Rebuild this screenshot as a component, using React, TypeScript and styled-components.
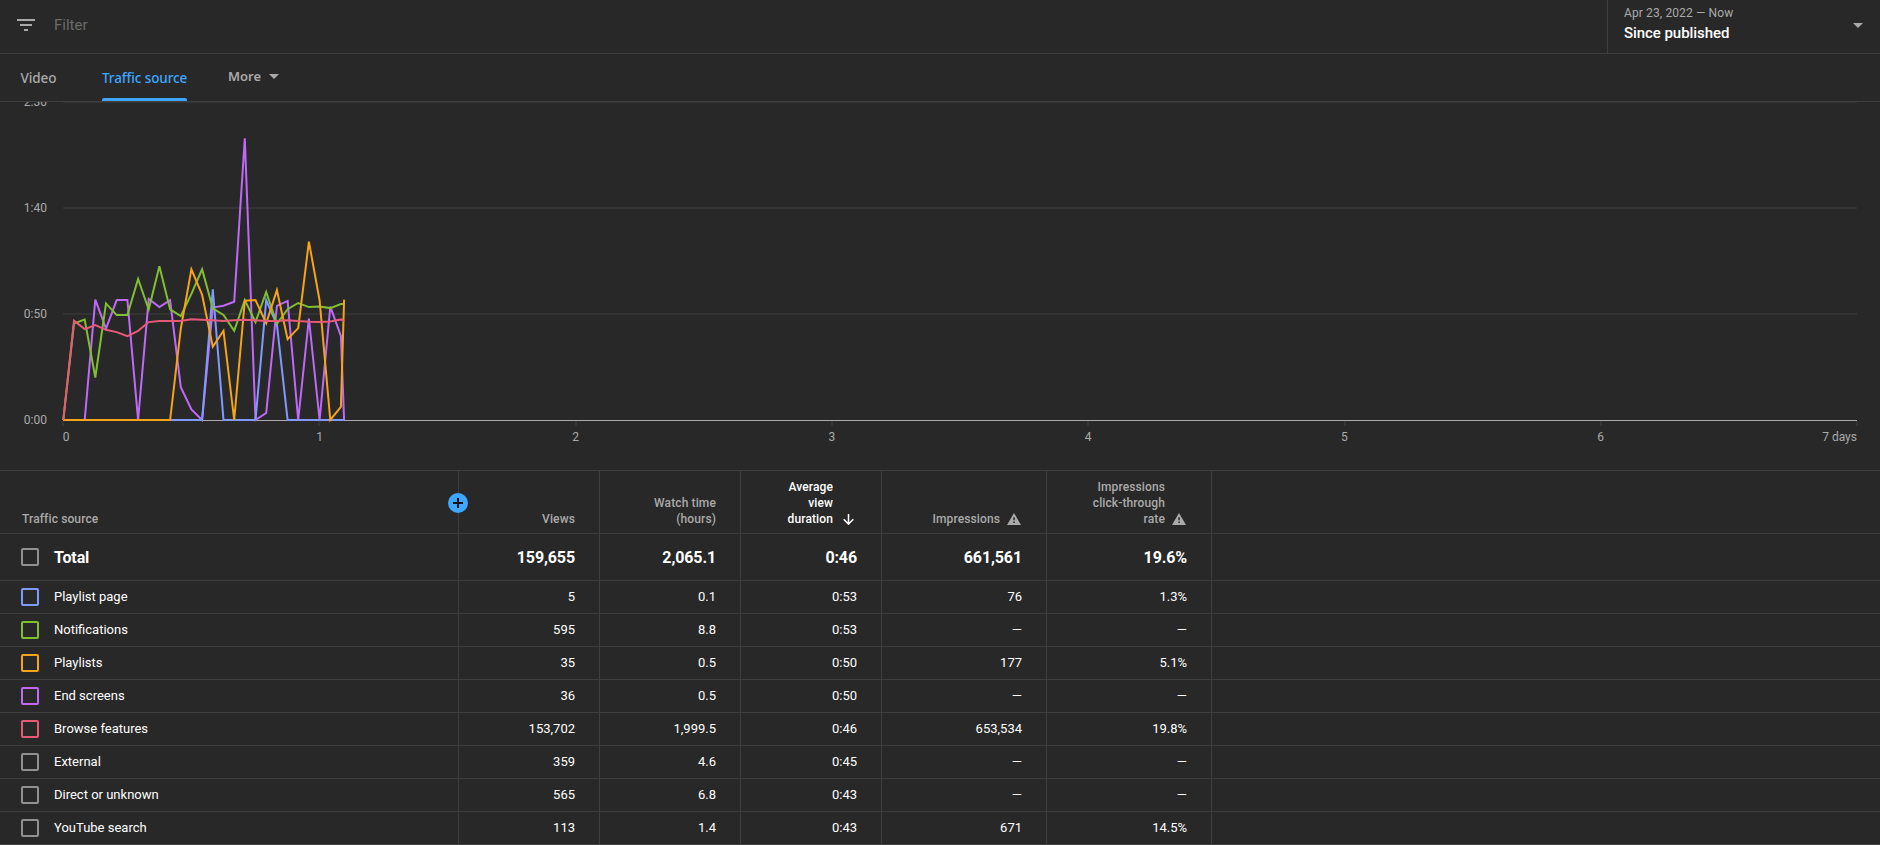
import React from "react";
import styled, { createGlobalStyle } from "styled-components";

type Punto = [number, number];

interface Serie {
    color: string;
    puntos: Punto[];
}

interface Fila {
    nombre: string;
    color: string;
    valores: string[];
}

const GRIS = "#909090";

const filas: Fila[] = [
    { nombre: "Playlist page", color: "#8099ff", valores: ["5", "0.1", "0:53", "76", "1.3%"] },
    { nombre: "Notifications", color: "#80c030", valores: ["595", "8.8", "0:53", "—", "—"] },
    { nombre: "Playlists", color: "#f5a318", valores: ["35", "0.5", "0:50", "177", "5.1%"] },
    { nombre: "End screens", color: "#bf69f9", valores: ["36", "0.5", "0:50", "—", "—"] },
    { nombre: "Browse features", color: "#e65a78", valores: ["153,702", "1,999.5", "0:46", "653,534", "19.8%"] },
    { nombre: "External", color: GRIS, valores: ["359", "4.6", "0:45", "—", "—"] },
    { nombre: "Direct or unknown", color: GRIS, valores: ["565", "6.8", "0:43", "—", "—"] },
    { nombre: "YouTube search", color: GRIS, valores: ["113", "1.4", "0:43", "671", "14.5%"] },
];

// [hour, seconds]
const series: Serie[] = [
    {
        color: "#bf69f9",
        puntos: [[0, 0], [2, 0], [3, 56.7], [4, 43], [5, 56.5], [6, 56.5], [7, 0], [8, 57], [9, 53.2], [10, 56.5], [11, 15.5], [12, 5], [13, 0],
            [14, 53], [15, 53.8], [16, 55.7], [17, 132.7], [18, 0], [19, 3.3], [20, 53.8], [21, 56.1], [22, 0], [23, 47.8], [24, 0], [25, 53.4], [26, 39.6], [26.3, 0]],
    },
    {
        color: "#8099ff",
        puntos: [[0, 0], [13, 0], [14, 61.5], [15, 0], [18, 0], [19, 56.4], [20, 45], [21, 0], [26.3, 0]],
    },
    {
        color: "#80c030",
        puntos: [[0, 0], [1, 45.5], [2, 47.3], [3, 20], [4, 54.9], [5, 49.4], [6, 49.4], [7, 66.4], [8, 52], [9, 72.4], [10, 52.1], [11, 49], [12, 59.4],
            [13, 71], [14, 52.6], [15, 49.5], [16, 42], [17, 56.5], [18, 46.1], [19, 60.3], [20, 45.3], [21, 52.2], [22, 55.1], [23, 53.2], [24, 53.5], [25, 52.7], [26, 54.6], [26.3, 54.7]],
    },
    {
        color: "#f5a318",
        puntos: [[0, 0], [10, 0], [11, 43], [12, 71], [13, 59], [14, 34.5], [15, 42], [16, 0], [17, 56.2], [18, 56.5], [19, 45.6], [20, 61.2], [21, 38.1],
            [22, 43.3], [23, 84], [24, 56.3], [25, 0], [26, 6.1], [26.3, 56.7]],
    },
    {
        color: "#e65a78",
        puntos: [[0, 0], [1, 46.8], [2, 42.8], [3, 44.7], [4, 42.5], [5, 41.4], [6, 39.5], [7, 42], [8, 46.1], [9, 46.6], [10, 46.6], [11, 46.7], [12, 47.5],
            [13, 47.2], [14, 47], [15, 46.7], [16, 47], [17, 47.2], [18, 47], [19, 46.7], [20, 46.6], [21, 47], [22, 46.7], [23, 46.3], [24, 46.1], [25, 46.4], [26, 47.4], [26.3, 46.6]],
    },
];

const X0 = 63.3;
const ANCHO_HORA = 1794 / 7 / 24;
const Y0 = 318;

const aPuntos = (puntos: Punto[]) =>
    puntos.map(([h, s]) => `${(X0 + h * ANCHO_HORA).toFixed(1)},${(Y0 - s * 2.123).toFixed(1)}`).join(" ");

const Grafico = () => (
    <Svg width="1880" height="368" viewBox="0 0 1880 368">
        <rect x="63" y="0" width="1794" height="1" fill="#333" />
        <rect x="63" y="105" width="1794" height="2" fill="#333" />
        <rect x="63" y="211" width="1794" height="2" fill="#333" />
        <rect x="63" y="318" width="1794" height="1" fill="#aaa" />
        {[0, 1, 2, 3, 4, 5, 6, 7].map((d) => (
            <rect key={d} x={Math.min(1856, 62 + Math.round(d * 256.3))} y="319" width="2" height="5" fill="#333" />
        ))}
        {["2:30", "1:40", "0:50", "0:00"].map((t, i) => (
            <TextoEje key={t} x="47" y={3.7 + i * 106.1} textAnchor="end">{t}</TextoEje>
        ))}
        {[0, 1, 2, 3, 4, 5, 6].map((d) => (
            <TextoEje key={d} x={d === 0 ? 66 : 63.3 + d * 256.2} y="339" textAnchor="middle">{d}</TextoEje>
        ))}
        <TextoEje x="1857" y="339" textAnchor="end">7 days</TextoEje>
        {series.map((s) => (
            <polyline key={s.color} points={aPuntos(s.puntos)} fill="none" stroke={s.color} strokeWidth="2" />
        ))}
    </Svg>
);

const IconoFiltro = () => (
    <svg width="18" height="12" viewBox="0 0 18 12" fill="#aaa">
        <path d="M0 0h18v2H0zM3 5h12v2H3zM7 10h4v2H7z" />
    </svg>
);

const Flecha = () => (
    <svg width="10" height="5" viewBox="0 0 10 5" fill="#aaa">
        <path d="M0 0h10L5 5z" />
    </svg>
);

const IconoAviso = () => (
    <svg width="14" height="12" viewBox="0 0 14 12">
        <path d="M7 0l7 12H0z" fill="#aaa" />
        <path d="M6.3 4.2h1.5v3H6.3zM6.3 8.5h1.5V10H6.3z" fill="#282828" />
    </svg>
);

const IconoOrden = () => (
    <svg width="11" height="11" viewBox="0 0 11 11" fill="none" stroke="#fff" strokeWidth="1.5">
        <path d="M5.5 0v10M0.7 5.3l4.8 4.8 4.8-4.8" />
    </svg>
);

const App = () => {
    return (
        <>
            <EstiloGlobal />
            <Pagina>
                <BarraFiltro>
                    <ZonaFiltro>
                        <IconoFiltro />
                        <TextoFiltro>Filter</TextoFiltro>
                    </ZonaFiltro>
                    <Periodo>
                        <TextosPeriodo>
                            <Fechas>Apr 23, 2022 — Now</Fechas>
                            <TituloPeriodo>Since published</TituloPeriodo>
                        </TextosPeriodo>
                        <Flecha />
                    </Periodo>
                </BarraFiltro>

                <BarraPestanas>
                    <Pestana>Video</Pestana>
                    <Pestana $activa>Traffic source</Pestana>
                    <BotonMas><TextoMas>More</TextoMas> <Flecha /></BotonMas>
                </BarraPestanas>

                <Grafico />

                <Tabla>
                    <FilaTabla $alto={63}>
                        <CeldaNombre $cabecera>
                            Traffic source
                            <BotonAgregar>
                                <svg width="10" height="10" viewBox="0 0 10 10" fill="#111">
                                    <path d="M4 0h2v4h4v2H6v4H4V6H0V4h4z" />
                                </svg>
                            </BotonAgregar>
                        </CeldaNombre>
                        <CeldaCabecera>Views</CeldaCabecera>
                        <CeldaCabecera>Watch time<br />(hours)</CeldaCabecera>
                        <CeldaCabecera $activa>
                            Average<br />view<br />duration
                            <HuecoOrden><IconoOrden /></HuecoOrden>
                        </CeldaCabecera>
                        <CeldaCabecera $icono>
                            Impressions
                            <HuecoAviso><IconoAviso /></HuecoAviso>
                        </CeldaCabecera>
                        <CeldaCabecera $icono>
                            Impressions<br />click-through<br />rate
                            <HuecoAviso><IconoAviso /></HuecoAviso>
                        </CeldaCabecera>
                    </FilaTabla>

                    <FilaTabla $alto={47} $total>
                        <CeldaNombre><Casilla $color={GRIS} />Total</CeldaNombre>
                        {["159,655", "2,065.1", "0:46", "661,561", "19.6%"].map((v) => (
                            <Celda key={v} $total>{v}</Celda>
                        ))}
                    </FilaTabla>

                    {filas.map((fila) => (
                        <FilaTabla key={fila.nombre} $alto={33}>
                            <CeldaNombre><Casilla $color={fila.color} /><Nombre>{fila.nombre}</Nombre></CeldaNombre>
                            {fila.valores.map((v, i) => (
                                <Celda key={i}>{v}</Celda>
                            ))}
                        </FilaTabla>
                    ))}
                </Tabla>
            </Pagina>
        </>
    )
}

export default App;


const EstiloGlobal = createGlobalStyle`
    body {
        margin: 0;
        background: #282828;
    }
    * {
        box-sizing: border-box;
    }
`

const Pagina = styled.div`
    width: 1880px;
    height: 845px;
    overflow: hidden;
    background: #282828;
    color: #fff;
    font-family: Roboto, "Liberation Sans", sans-serif;
`

const BarraFiltro = styled.div`
    display: flex;
    height: 54px;
    border-bottom: 1px solid #3e3e3e;
`

const ZonaFiltro = styled.div`
    display: flex;
    flex: 1;
    align-items: center;
    gap: 19px;
    padding: 0 0 4px 17px;
`

const TextoFiltro = styled.span`
    color: #6b6b6b;
    font-size: 15px;
`

const Periodo = styled.div`
    display: flex;
    justify-content: space-between;
    align-items: center;
    width: 273px;
    padding: 0 17px 2px 16px;
    border-left: 1px solid #3e3e3e;
`

const TextosPeriodo = styled.div`
    padding-bottom: 2px;
`

const Fechas = styled.div`
    color: #aaa;
    font-size: 12px;
    line-height: 16px;
    letter-spacing: 0.12px;
`

const TituloPeriodo = styled.div`
    font-size: 15px;
    line-height: 24px;
    font-weight: 500;
    letter-spacing: -0.06px;
`

const BarraPestanas = styled.div`
    display: flex;
    height: 48px;
    border-bottom: 1px solid #3e3e3e;
    padding-left: 20.5px;
    font-family: "Noto Sans", "Open Sans", sans-serif;
    font-size: 13.5px;
    font-weight: 500;
    color: #aaa;
`

const Pestana = styled.div<{ $activa?: boolean }>`
    display: flex;
    flex-direction: column;
    justify-content: space-between;
    width: ${(p) => (p.$activa ? "85px" : "36px")};
    margin-right: ${(p) => (p.$activa ? "41px" : "45.5px")};
    line-height: 44px;
    padding-top: 2px;
    white-space: nowrap;
    letter-spacing: -0.1px;
    color: ${(p) => (p.$activa ? "#3ea6ff" : "#aaa")};
    ${(p) => p.$activa && `
        &::after {
            content: "";
            height: 3px;
            margin-top: -2px;
            flex-shrink: 0;
            border-radius: 2px 2px 0 0;
            background: #3ea6ff;
        }
    `}
`

const BotonMas = styled.div`
    display: flex;
    align-items: center;
    gap: 8px;
    height: 45px;
    font-size: 13px;
    font-weight: 600;
`

const TextoMas = styled.span`
    padding-bottom: 2px;
`

const Svg = styled.svg`
    display: block;
`

const TextoEje = styled.text`
    fill: #aaa;
    font-size: 12px;
    font-family: Roboto, sans-serif;
`

const Tabla = styled.div`
    border-top: 1px solid #3e3e3e;
`

const FilaTabla = styled.div<{ $alto: number; $total?: boolean }>`
    display: grid;
    grid-template-columns: 459px 141px 141px 141px 165px 165px 1fr;
    height: ${(p) => p.$alto}px;
    border-bottom: 1px solid #3e3e3e;
    font-size: ${(p) => (p.$total ? "16px" : "13px")};
    font-weight: ${(p) => (p.$total ? 700 : 400)};
    letter-spacing: ${(p) => (p.$total ? "-0.12px" : "0")};
`

const Celda = styled.div<{ $total?: boolean }>`
    display: flex;
    align-items: center;
    justify-content: flex-end;
    padding-right: 24px;
    padding-bottom: ${(p) => (p.$total ? "0" : "2px")};
    border-right: 1px solid #3e3e3e;
`

const CeldaNombre = styled.div<{ $cabecera?: boolean }>`
    position: relative;
    display: flex;
    align-items: ${(p) => (p.$cabecera ? "flex-end" : "center")};
    gap: 15px;
    padding: ${(p) => (p.$cabecera ? "0 0 6px 22px" : "0 0 0 21px")};
    border-right: 1px solid #3e3e3e;
    ${(p) => p.$cabecera && `
        color: #aaa;
        font-size: 12px;
        font-weight: 500;
        line-height: 16px;
        letter-spacing: 0.12px;
    `}
`

const Nombre = styled.span`
    padding-bottom: 2px;
`

const CeldaCabecera = styled.div<{ $activa?: boolean; $icono?: boolean }>`
    position: relative;
    align-content: end;
    padding-bottom: 6px;
    padding-right: ${(p) => (p.$activa ? 48 : p.$icono ? 46 : 24)}px;
    border-right: 1px solid #3e3e3e;
    text-align: right;
    font-size: 12px;
    font-weight: 500;
    line-height: 16px;
    letter-spacing: 0.12px;
    color: ${(p) => (p.$activa ? "#fff" : "#aaa")};
`

const HuecoOrden = styled.span`
    position: absolute;
    display: flex;
    right: 27px;
    bottom: 8px;
`

const HuecoAviso = styled.span`
    position: absolute;
    display: flex;
    right: 25px;
    bottom: 8px;
`

const BotonAgregar = styled.div`
    position: absolute;
    right: -10px;
    top: 22px;
    z-index: 1;
    display: flex;
    align-items: center;
    justify-content: center;
    width: 20px;
    height: 20px;
    border-radius: 50%;
    background: #3ea6ff;
`

const Casilla = styled.span<{ $color: string }>`
    width: 18px;
    height: 18px;
    border: 2px solid ${(p) => p.$color};
    border-radius: 2px;
`
